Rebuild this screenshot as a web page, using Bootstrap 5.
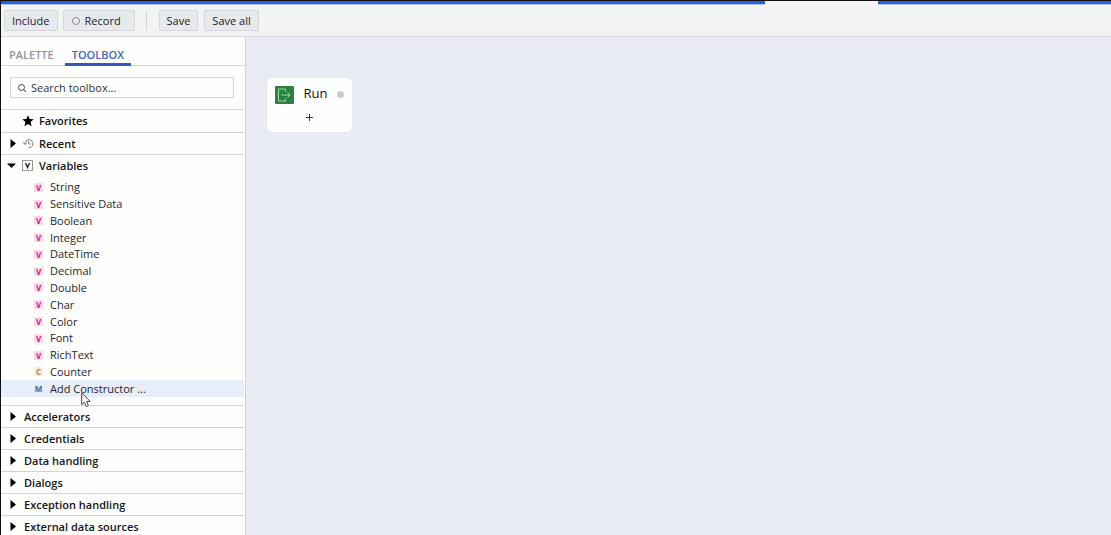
<!DOCTYPE html>
<html lang="en">
<head>
<meta charset="utf-8">
<meta name="viewport" content="width=device-width, initial-scale=1">
<title>Toolbox</title>
<link href="https://cdn.jsdelivr.net/npm/bootstrap@5.3.0/dist/css/bootstrap.min.css" rel="stylesheet">
<style>
  body { font: 11px/16px "Open Sans", "Noto Sans", sans-serif; color: #1c1d22; background: #e9ecf5; }
  svg { display: block; flex: none; }
  .app { border-top: 1px solid #111; border-left: 1px solid #111; }
  .strip { height: 4px; background: #2b5fda; border-bottom: 1px solid #b4c4ec; }
  .strip-gap { width: 113px; background: #f4f3f7; }
  .strip-end { width: 21%; }
  .topbar { height: 32px; padding: 0 3px; background: #f2f3f4; border-bottom: 1px solid #d9dbe0; }
  .tool { --bs-btn-font-size: 11px; --bs-btn-line-height: 19px; --bs-btn-padding-y: 0; --bs-btn-padding-x: 7px; --bs-btn-border-radius: 2px;
    --bs-btn-color: #222329; --bs-btn-bg: #e7e9ec; --bs-btn-border-color: #d5d7dc; --bs-btn-hover-bg: #dde0e5; --bs-btn-hover-border-color: #c5c8ce; }
  .record { width: 72px; margin: 0 11px 0 5px; }
  .sep { width: 1px; height: 19px; background: #d2d4d9; margin-right: 12px; }
  .save { margin-right: 6px; }
  .side { width: 245px; background: #fefefd; border-right: 1px solid #cfd3de; }
  .tabs { height: 29px; border-bottom: 1px solid #d3d6df; }
  .tabs .nav-link { padding: 10px 7px 0; height: 29px; font-size: 11px; font-weight: 600; color: #929398; border-bottom: 3px solid transparent; }
  .tabs .nav-link.active { color: #4267c0; border-color: #3059bd; }
  .search { margin: 11px 11px 11px 9px; height: 21px; border: 1px solid #d3d5dc; padding: 0 6px; }
  .search input { font-size: 11px; line-height: 18px; min-height: 0; color: #303138; }
  .search input::placeholder { color: #303138; opacity: 1; }
  .group { height: 22px; border: 0; border-top: 1px solid #d0d3dc; margin-right: 1px; padding: 0 0 0 9px; background: none; font-size: 11px; font-weight: 600; text-align: left; color: #15161a; }
  .group-first { height: 23px; }
  .group .arrow { width: 14px; }
  .group .pic-arrow { width: 12px; }
  .group .pic { width: 17px; }
  .open { padding-left: 6px; }
  .open .pic-arrow { width: 14px; }
  .open .pic { width: 18px; }
  .items { height: 229px; padding: 3px 0 8px; margin-right: 1px; display: grid; grid-auto-rows: 1fr; }
  .item { padding-left: 33px; gap: 7px; color: #25262c; }
  .item.on { background: #e8edfb; }
  .tag { width: 9px; height: 9px; font-size: 8px; line-height: 9px; font-weight: 700; text-align: center; background: #fbd9eb; color: #c41f70; }
  .tag-c { background: #faeedb; color: #bd8545; }
  .tag-m { background: #dfe8f8; color: #466899; }
  .pointer { left: 80px; top: 12px; z-index: 2; }
  .node { left: 21px; top: 41px; width: 85px; height: 54px; background: #fefefe; border-radius: 5px; padding: 7px 8px 0 8px; box-shadow: 0 0 2px #dde0ea; }
  .node-name { font-size: 13px; line-height: 17px; height: 19px; color: #111; }
  .dot { width: 7px; height: 7px; border-radius: 50%; background: #c9c9ce; }
  .add { height: 10px; width: 20px; }
</style>
</head>
<body>
<svg width="0" height="0" class="position-absolute" aria-hidden="true"><defs>
  <path id="right" d="M.5 0 6 4.500.5 9Z"/>
</defs></svg>
<div class="app vh-100 d-flex flex-column overflow-hidden">
  <div class="d-flex flex-shrink-0">
    <div class="strip flex-grow-1"></div><div class="strip-gap"></div><div class="strip strip-end"></div>
  </div>
  <header class="topbar d-flex align-items-center flex-shrink-0">
    <button class="btn tool" type="button">Include</button>
    <button class="btn tool record d-flex align-items-center" type="button">
      <svg class="me-1" width="10" height="10"><circle cx="5" cy="5" r="3.5" fill="none" stroke="#888"/></svg>Record</button>
    <div class="sep"></div>
    <button class="btn tool save" type="button">Save</button>
    <button class="btn tool" type="button">Save all</button>
  </header>
  <div class="d-flex flex-grow-1 overflow-hidden">
    <aside class="side flex-shrink-0 d-flex flex-column overflow-hidden">
      <nav class="nav tabs flex-nowrap flex-shrink-0 gap-1">
        <a class="nav-link ps-2" href="#">PALETTE</a>
        <a class="nav-link active" href="#">TOOLBOX</a>
      </nav>
      <label class="search d-flex align-items-center flex-shrink-0">
        <svg class="me-1" width="10" height="10" viewBox="0 0 10 10" fill="none" stroke="#444"><circle cx="4.5" cy="4.5" r="3"/><path d="M6.7 6.7 9 9"/></svg>
        <input class="form-control border-0 shadow-none bg-transparent p-0" type="text" placeholder="Search toolbox..." aria-label="Search toolbox">
      </label>
      <button class="group group-first d-flex align-items-center flex-shrink-0" type="button"><span class="pic-arrow"></span>
        <span class="pic"><svg width="12" height="12" viewBox="0 0 12 12"><path d="M6 .3 7.6 4l4.100.3-3.100 2.600 1 4.300L6 9l-3.600 2.200 1-4.300L.3 4.300 4.400 4Z"/></svg></span>Favorites</button>
      <button class="group d-flex align-items-center flex-shrink-0" type="button"><span class="pic-arrow"><svg width="7" height="9"><use href="#right"/></svg></span>
        <span class="pic"><svg width="12" height="11" viewBox="0 0 12 11" fill="none" stroke="#777"><path d="M3 6A4 4 0 1 1 6.500 9.700M1 4.500 3 6.500 5 4.800M6.700 3.200V6H8.500"/></svg></span>Recent</button>
      <button class="group open d-flex align-items-center flex-shrink-0" type="button" aria-expanded="true"><span class="pic-arrow"><svg width="9" height="6"><path d="M0 .5H9L4.500 5Z"/></svg></span>
        <span class="pic"><svg width="12" height="11" viewBox="0 0 12 11" fill="none"><rect x="1.500" y=".5" width="10" height="10" stroke="#999"/><path d="M4.500 3 6.500 7.500 8.500 3" stroke="#222" stroke-width="1.4"/></svg></span>Variables</button>
      <div class="items flex-shrink-0">
        <div class="item d-flex align-items-center"><span class="tag">V</span>String</div>
        <div class="item d-flex align-items-center"><span class="tag">V</span>Sensitive Data</div>
        <div class="item d-flex align-items-center"><span class="tag">V</span>Boolean</div>
        <div class="item d-flex align-items-center"><span class="tag">V</span>Integer</div>
        <div class="item d-flex align-items-center"><span class="tag">V</span>DateTime</div>
        <div class="item d-flex align-items-center"><span class="tag">V</span>Decimal</div>
        <div class="item d-flex align-items-center"><span class="tag">V</span>Double</div>
        <div class="item d-flex align-items-center"><span class="tag">V</span>Char</div>
        <div class="item d-flex align-items-center"><span class="tag">V</span>Color</div>
        <div class="item d-flex align-items-center"><span class="tag">V</span>Font</div>
        <div class="item d-flex align-items-center"><span class="tag">V</span>RichText</div>
        <div class="item d-flex align-items-center"><span class="tag tag-c">C</span>Counter</div>
        <div class="item on d-flex align-items-center position-relative"><span class="tag tag-m">M</span>Add Constructor ...
          <svg class="pointer position-absolute" width="11" height="16" viewBox="0 0 11 16"><path d="M.7.8V12.6L3.4 10.2 5.3 14.6 7.4 13.7 5.6 9.4H9.2Z" fill="#fff" stroke="#444"/></svg></div>
      </div>
      <button class="group d-flex align-items-center flex-shrink-0" type="button"><span class="arrow"><svg width="7" height="9"><use href="#right"/></svg></span>Accelerators</button>
      <button class="group d-flex align-items-center flex-shrink-0" type="button"><span class="arrow"><svg width="7" height="9"><use href="#right"/></svg></span>Credentials</button>
      <button class="group d-flex align-items-center flex-shrink-0" type="button"><span class="arrow"><svg width="7" height="9"><use href="#right"/></svg></span>Data handling</button>
      <button class="group d-flex align-items-center flex-shrink-0" type="button"><span class="arrow"><svg width="7" height="9"><use href="#right"/></svg></span>Dialogs</button>
      <button class="group d-flex align-items-center flex-shrink-0" type="button"><span class="arrow"><svg width="7" height="9"><use href="#right"/></svg></span>Exception handling</button>
      <button class="group d-flex align-items-center flex-shrink-0" type="button"><span class="arrow"><svg width="7" height="9"><use href="#right"/></svg></span>External data sources</button>
    </aside>
    <main class="flex-grow-1 position-relative">
      <div class="node position-absolute">
        <div class="d-flex align-items-center justify-content-between">
          <svg width="19" height="18" viewBox="0 0 19 18" fill="none"><rect width="19" height="18" rx="1" fill="#28843f"/><path d="M10.5 5.500V3H3.500V15H10.500V12.500M6.500 9H15M12.500 6.500 15 9 12.500 11.500" stroke="#a5d1ae"/></svg>
          <span class="node-name">Run</span><span class="dot"></span>
        </div>
        <button class="btn add border-0 p-0 d-flex align-items-center justify-content-center mx-auto mt-2" type="button" aria-label="Add"><svg width="9" height="9"><path d="M4.500 1V8M1 4.500H8" stroke="#333"/></svg></button>
      </div>
    </main>
  </div>
</div>
<script src="https://cdn.jsdelivr.net/npm/bootstrap@5.3.0/dist/js/bootstrap.bundle.min.js"></script>
</body>
</html>
